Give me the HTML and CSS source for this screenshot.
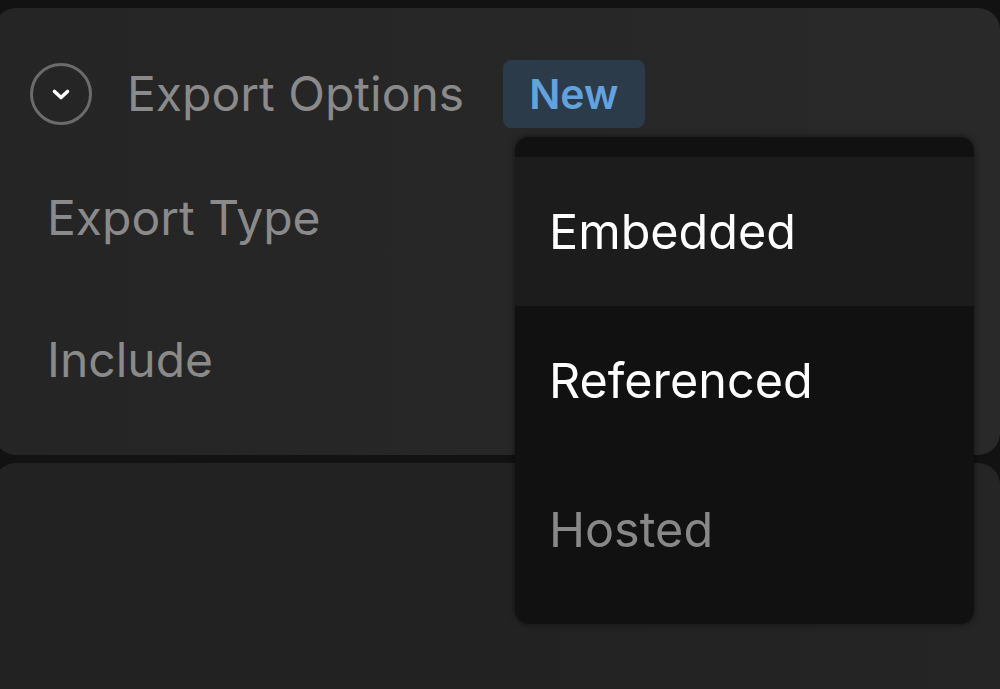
FILE: index.html
```html
<!DOCTYPE html>
<html lang="en">

<head>
  <meta charset="UTF-8">
  <meta name="viewport" content="width=device-width, initial-scale=1.0">
  <title>Export Options</title>
  <link rel="stylesheet" href="styles.css">
</head>

<body>
  <div class="cards">
    <div class="card options">
      <div class="header">
        <svg class="toggle" width="64" height="64" viewBox="0 0 64 64">
          <circle cx="32" cy="32" r="29.5" fill="none" stroke="#6b6b6b" stroke-width="3" />
          <path d="M25.5 29.5 L32 35.5 L38.5 29.5" fill="none" stroke="#fff" stroke-width="3.6"
            stroke-linecap="round" stroke-linejoin="round" />
        </svg>
        <span class="title">Export Options</span>
        <span class="badge">New</span>
      </div>
      <div class="row">Export Type</div>
      <div class="row">Include</div>

      <ul class="menu">
        <li class="item active">Embedded</li>
        <li class="item">Referenced</li>
        <li class="item muted">Hosted</li>
      </ul>
    </div>
    <div class="card second"></div>
  </div>
</body>

</html>
```

FILE: styles.css
```css
html,
body {
  margin: 0;
  height: 100%;
  overflow: hidden;
}

body {
  background: #121212;
  font-family: Inter, "Liberation Sans", sans-serif;
  padding-top: 8px;
  box-sizing: border-box;
}

.cards {
  display: flex;
  flex-direction: column;
  gap: 8px;
  margin-left: -6px;
}

.card {
  border-radius: 22px;
  background: linear-gradient(90deg, #252525 0%, #272727 60%, #292929 100%);
}

.options {
  position: relative;
  height: 447px;
  padding: 52px 0 0 36px;
  box-sizing: border-box;
}

.second {
  height: 260px;
  background: linear-gradient(90deg, #222222 0%, #232323 70%, #252525 100%);
}

.header {
  display: flex;
  align-items: center;
  height: 67px;
  margin-bottom: 19px;
}

.toggle {
  display: block;
  margin-left: -1px;
}

.title {
  margin-left: 34px;
  font-size: 48px;
  color: #8a8a8a;
}

.badge {
  margin-left: 39px;
  padding: 0 27px 0 26px;
  height: 68px;
  line-height: 68px;
  border-radius: 8px;
  background: #2c3b49;
  color: #62a2dd;
  font-size: 41px;
  font-weight: 600;
}

.row {
  display: flex;
  align-items: center;
  height: 142px;
  padding-left: 17px;
  font-size: 48px;
  color: #8a8a8a;
}

.menu {
  position: absolute;
  left: 521px;
  top: 129px;
  width: 459px;
  margin: 0;
  padding: 20px 0;
  list-style: none;
  background: #111111;
  border-radius: 14px;
  box-shadow: 0 0 6px rgba(0, 0, 0, 0.55);
  overflow: hidden;
}

.item {
  display: flex;
  align-items: center;
  height: 149px;
  padding-left: 34px;
  font-size: 48.5px;
  color: #ffffff;
}

.item.active {
  background: #1c1c1c;
}

.item.muted {
  color: #888888;
}
```
